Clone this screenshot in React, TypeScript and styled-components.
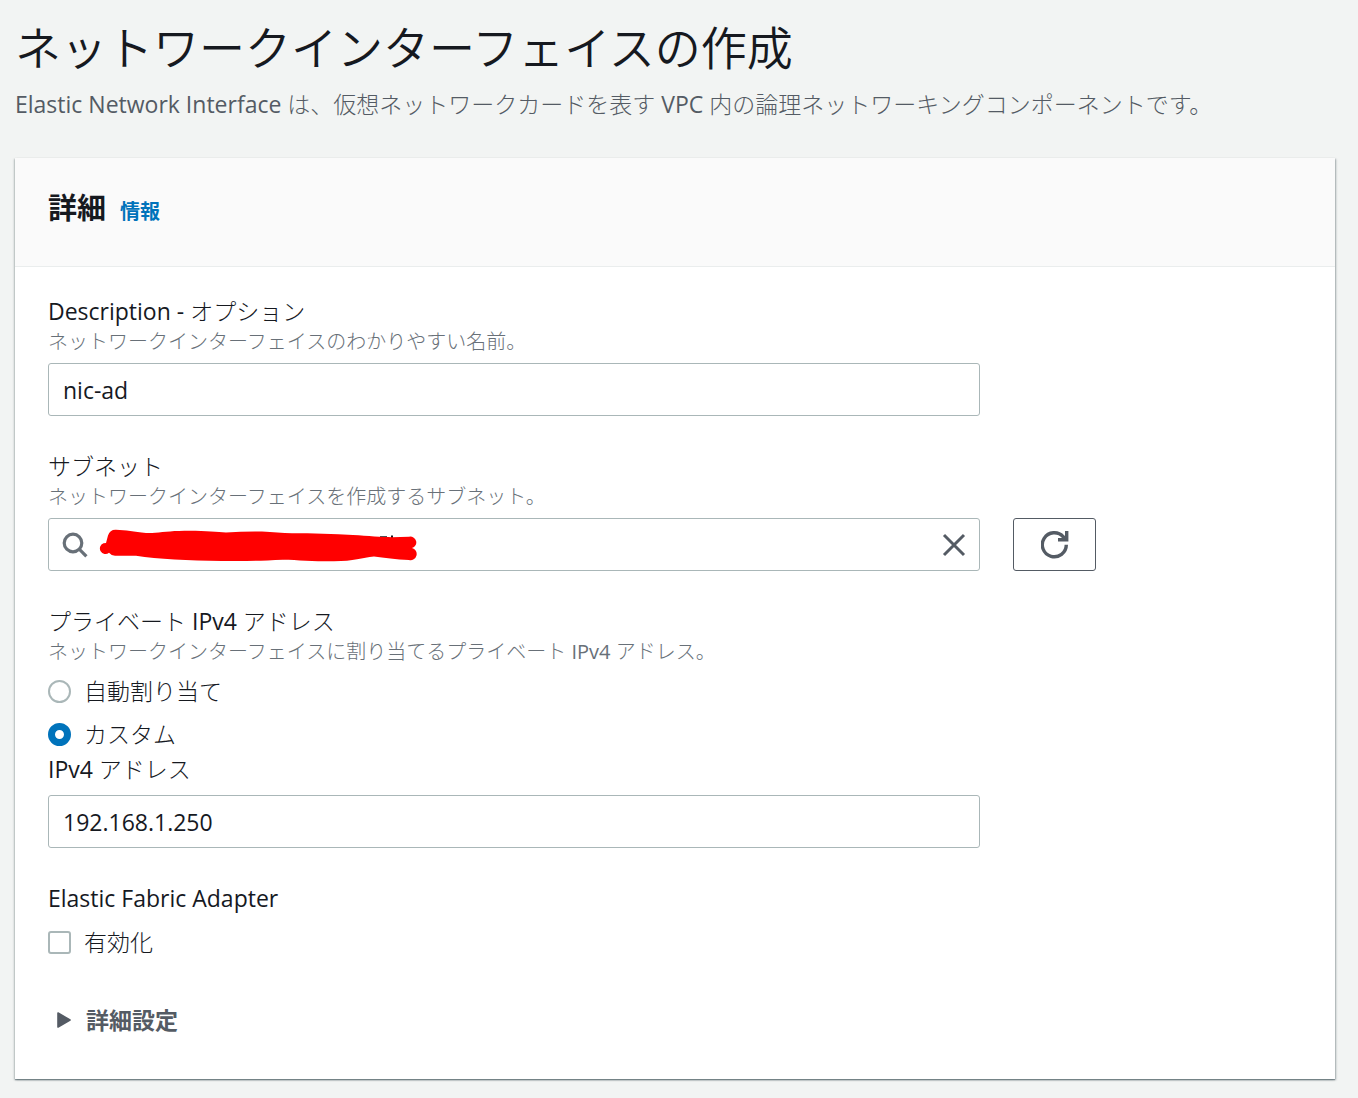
import React, { useState } from "react";
import styled, { createGlobalStyle } from "styled-components";

const color = {
  page: "#f2f4f3",
  text: "#16191f",
  muted: "#545b64",
  hint: "#687078",
  link: "#0073bb",
  border: "#aab7b8",
  divider: "#eaeded",
};

const GlobalStyle = createGlobalStyle`
  *, *::before, *::after { box-sizing: border-box; }
  body {
    margin: 0;
    background: ${color.page};
    color: ${color.text};
    font-family: "Open Sans", "Noto Sans CJK JP Light", "Noto Sans CJK JP", sans-serif;
    font-size: 23px;
    line-height: 32px;
  }
  button, input { font: inherit; color: inherit; }
`;

const Page = styled.main`
  padding: 15px 23px 18px 14px;
  padding-left: 15px;
`;

const Title = styled.h1`
  margin: 0;
  font-family: "Open Sans", "Noto Sans CJK JP DemiLight", "Noto Sans CJK JP", sans-serif;
  font-size: 46px;
  font-weight: 400;
  line-height: 64px;
`;

const Lead = styled.p`
  margin: 9px 0 38px;
  color: ${color.muted};
`;

const Card = styled.section`
  background: #fff;
  box-shadow: 0 1px 1px rgba(0, 28, 36, 0.3), 1px 1px 2px rgba(0, 28, 36, 0.3),
    -1px 1px 2px rgba(0, 28, 36, 0.2);
`;

const CardHeader = styled.header`
  display: flex;
  align-items: baseline;
  gap: 14px;
  padding: 30px 33px 38px;
  background: #fafafa;
  border-bottom: 1px solid ${color.divider};
`;

const CardTitle = styled.h2`
  margin: 0;
  font-family: "Noto Sans", "Noto Sans CJK JP", sans-serif;
  font-size: 29px;
  font-weight: 700;
  line-height: 40px;
`;

const InfoLink = styled.a`
  color: ${color.link};
  font-family: "Noto Sans", "Noto Sans CJK JP", sans-serif;
  font-size: 20px;
  font-weight: 700;
  text-decoration: none;
`;

const Form = styled.form`
  display: flex;
  flex-direction: column;
  gap: 34px;
  padding: 28px 33px 43px;
`;

const Field = styled.div`
  display: flex;
  flex-direction: column;
`;

const Group = styled.fieldset`
  display: flex;
  flex-direction: column;
  min-width: 0;
  margin: 0;
  padding: 0;
  border: 0;
`;

const Label = styled.label<{ $alone?: boolean }>`
  margin-bottom: ${(p) => (p.$alone ? "4px" : "0")};
`;

const Legend = styled.legend<{ $alone?: boolean }>`
  margin-bottom: ${(p) => (p.$alone ? "4px" : "0")};
  padding: 0;
`;

const Hint = styled.span`
  color: ${color.hint};
  font-size: 20px;
  line-height: 30px;
`;

const Columns = styled.div`
  display: grid;
  grid-template-columns: repeat(12, 1fr);
  column-gap: 33px;
  margin-top: 6px;
`;

const TextInput = styled.input`
  grid-column: span 9;
  width: 100%;
  height: 53px;
  padding: 0 14px;
  background: #fff;
  border: 1px solid ${color.border};
  border-radius: 3px;
`;

const SearchBox = styled.div`
  grid-column: span 9;
  display: flex;
  align-items: center;
  gap: 9px;
  height: 53px;
  padding: 0 12px;
  border: 1px solid ${color.border};
  border-radius: 3px;
`;

const SearchInput = styled.input`
  flex: 1;
  min-width: 0;
  border: 0;
  padding: 0;
  background: transparent;
  outline: none;
`;

const ClearButton = styled.button`
  display: flex;
  padding: 0;
  border: 0;
  background: none;
  cursor: pointer;
`;

const RefreshButton = styled.button`
  grid-column: span 3;
  justify-self: start;
  display: flex;
  align-items: center;
  justify-content: center;
  width: 83px;
  height: 53px;
  padding: 0;
  background: #fff;
  border: 1px solid ${color.muted};
  border-radius: 3px;
  cursor: pointer;
`;

const Choices = styled.div`
  display: flex;
  flex-direction: column;
  gap: 11px;
  padding: 8px 0 3px;
`;

const Choice = styled.label`
  display: flex;
  align-items: center;
  gap: 13px;
`;

const Mark = styled.input`
  appearance: none;
  flex: none;
  width: 23px;
  height: 23px;
  margin: 0;
  background: #fff;
  border: 2px solid ${color.border};
  border-radius: ${(p) => (p.type === "radio" ? "50%" : "3px")};

  &[type="radio"]:checked {
    border: 7px solid ${color.link};
  }
  &[type="checkbox"]:checked {
    background: ${color.link};
    border-color: ${color.link};
  }
`;

const Expander = styled.button`
  display: flex;
  align-items: center;
  align-self: flex-start;
  gap: 14px;
  margin-top: 9px;
  padding: 0 8px;
  border: 0;
  background: none;
  color: ${color.muted};
  font-family: "Noto Sans", "Noto Sans CJK JP", sans-serif;
  font-weight: 700;
  cursor: pointer;
`;

const SearchIcon = () => (
  <svg width="28" height="28" viewBox="0 0 28 28" fill="none" stroke={color.hint} strokeWidth="3.2" aria-hidden="true">
    <circle cx="12" cy="12" r="8.8" />
    <path d="M18.2 18.2 25.4 25.4" />
  </svg>
);

const Redaction = () => (
  <svg width="320" height="36" viewBox="0 -1 320 36" aria-hidden="true">
    <path d="M282 10V8.200H289V10ZM293 10V7.500H295V10Z" fill={color.text} />
    <path
      fill="#f00"
      d="M8 15 10 7.500Q12 1.500 18 1.800C28 2 36 4 48 5C58 5.500 67 3 81 2.900C104 2.200 118 4 128 4.400C140 4 152 3.200 164 3.600C175 4 184 5.200 194 5.200C214 5.200 236 5.800 255 7C270 8 284 9 294 9.200L311 8.800A5.600 5.600 0 0 1 314 20A5.800 5.800 0 0 1 311 32C298 31.500 286 29.500 276 28.500C264 30 256 33 236 33.300C218 33.500 200 32 185 31.700C160 33 140 33 124 33C90 32.500 60 31 38 27.700H17Q13 27.500 11 24.800A5.600 5.600 0 1 1 5.500 15.200Z"
    />
  </svg>
);

const CloseIcon = () => (
  <svg width="26" height="26" viewBox="0 0 26 26" fill="none" stroke={color.muted} strokeWidth="3" aria-hidden="true">
    <path d="M3 3 23 23M23 3 3 23" />
  </svg>
);

const RefreshIcon = () => (
  <svg width="28" height="28" viewBox="0 0 28 28" fill="none" stroke={color.muted} strokeWidth="3.4" aria-hidden="true">
    <path d="M25.300 13.700A12 12 0 1 1 22.300 5.800L25 8.500" />
    <path d="M25.700 0V8.800H17" />
  </svg>
);

const CaretIcon = () => (
  <svg width="16" height="18" viewBox="0 0 16 18" aria-hidden="true">
    <path d="M2 2 14 9 2 16Z" fill={color.muted} stroke={color.muted} strokeWidth="1.600" strokeLinejoin="round" />
  </svg>
);

export default function App() {
  const [description, setDescription] = useState("nic-ad");
  const [subnet, setSubnet] = useState("");
  const [mode, setMode] = useState("custom");
  const [address, setAddress] = useState("192.168.1.250");
  const [efa, setEfa] = useState(false);

  return (
    <>
      <GlobalStyle />
      <Page lang="ja">
        <Title>ネットワークインターフェイスの作成</Title>
        <Lead>
          Elastic Network Interface は、仮想ネットワークカードを表す VPC 内の論理ネットワーキングコンポーネントです。
        </Lead>
        <Card>
          <CardHeader>
            <CardTitle>詳細</CardTitle>
            <InfoLink href="#info">情報</InfoLink>
          </CardHeader>
          <Form onSubmit={(e) => e.preventDefault()}>
            <Field>
              <Label htmlFor="description">Description - オプション</Label>
              <Hint>ネットワークインターフェイスのわかりやすい名前。</Hint>
              <Columns>
                <TextInput id="description" value={description} onChange={(e) => setDescription(e.target.value)} />
              </Columns>
            </Field>
            <Field>
              <Label htmlFor="subnet">サブネット</Label>
              <Hint>ネットワークインターフェイスを作成するサブネット。</Hint>
              <Columns>
                <SearchBox>
                  <SearchIcon />
                  <Redaction />
                  <SearchInput id="subnet" value={subnet} onChange={(e) => setSubnet(e.target.value)} />
                  <ClearButton type="button" aria-label="クリア" onClick={() => setSubnet("")}>
                    <CloseIcon />
                  </ClearButton>
                </SearchBox>
                <RefreshButton type="button" aria-label="更新">
                  <RefreshIcon />
                </RefreshButton>
              </Columns>
            </Field>
            <Group>
              <Legend>プライベート IPv4 アドレス</Legend>
              <Hint>ネットワークインターフェイスに割り当てるプライベート IPv4 アドレス。</Hint>
              <Choices>
                <Choice>
                  <Mark type="radio" name="mode" checked={mode === "auto"} onChange={() => setMode("auto")} />
                  自動割り当て
                </Choice>
                <Choice>
                  <Mark type="radio" name="mode" checked={mode === "custom"} onChange={() => setMode("custom")} />
                  カスタム
                </Choice>
              </Choices>
              <Label htmlFor="address" $alone>
                IPv4 アドレス
              </Label>
              <Columns>
                <TextInput id="address" value={address} onChange={(e) => setAddress(e.target.value)} />
              </Columns>
            </Group>
            <Group>
              <Legend $alone>Elastic Fabric Adapter</Legend>
              <Choices>
                <Choice>
                  <Mark type="checkbox" checked={efa} onChange={(e) => setEfa(e.target.checked)} />
                  有効化
                </Choice>
              </Choices>
            </Group>
            <Expander type="button" aria-expanded="false">
              <CaretIcon />
              詳細設定
            </Expander>
          </Form>
        </Card>
      </Page>
    </>
  );
}
